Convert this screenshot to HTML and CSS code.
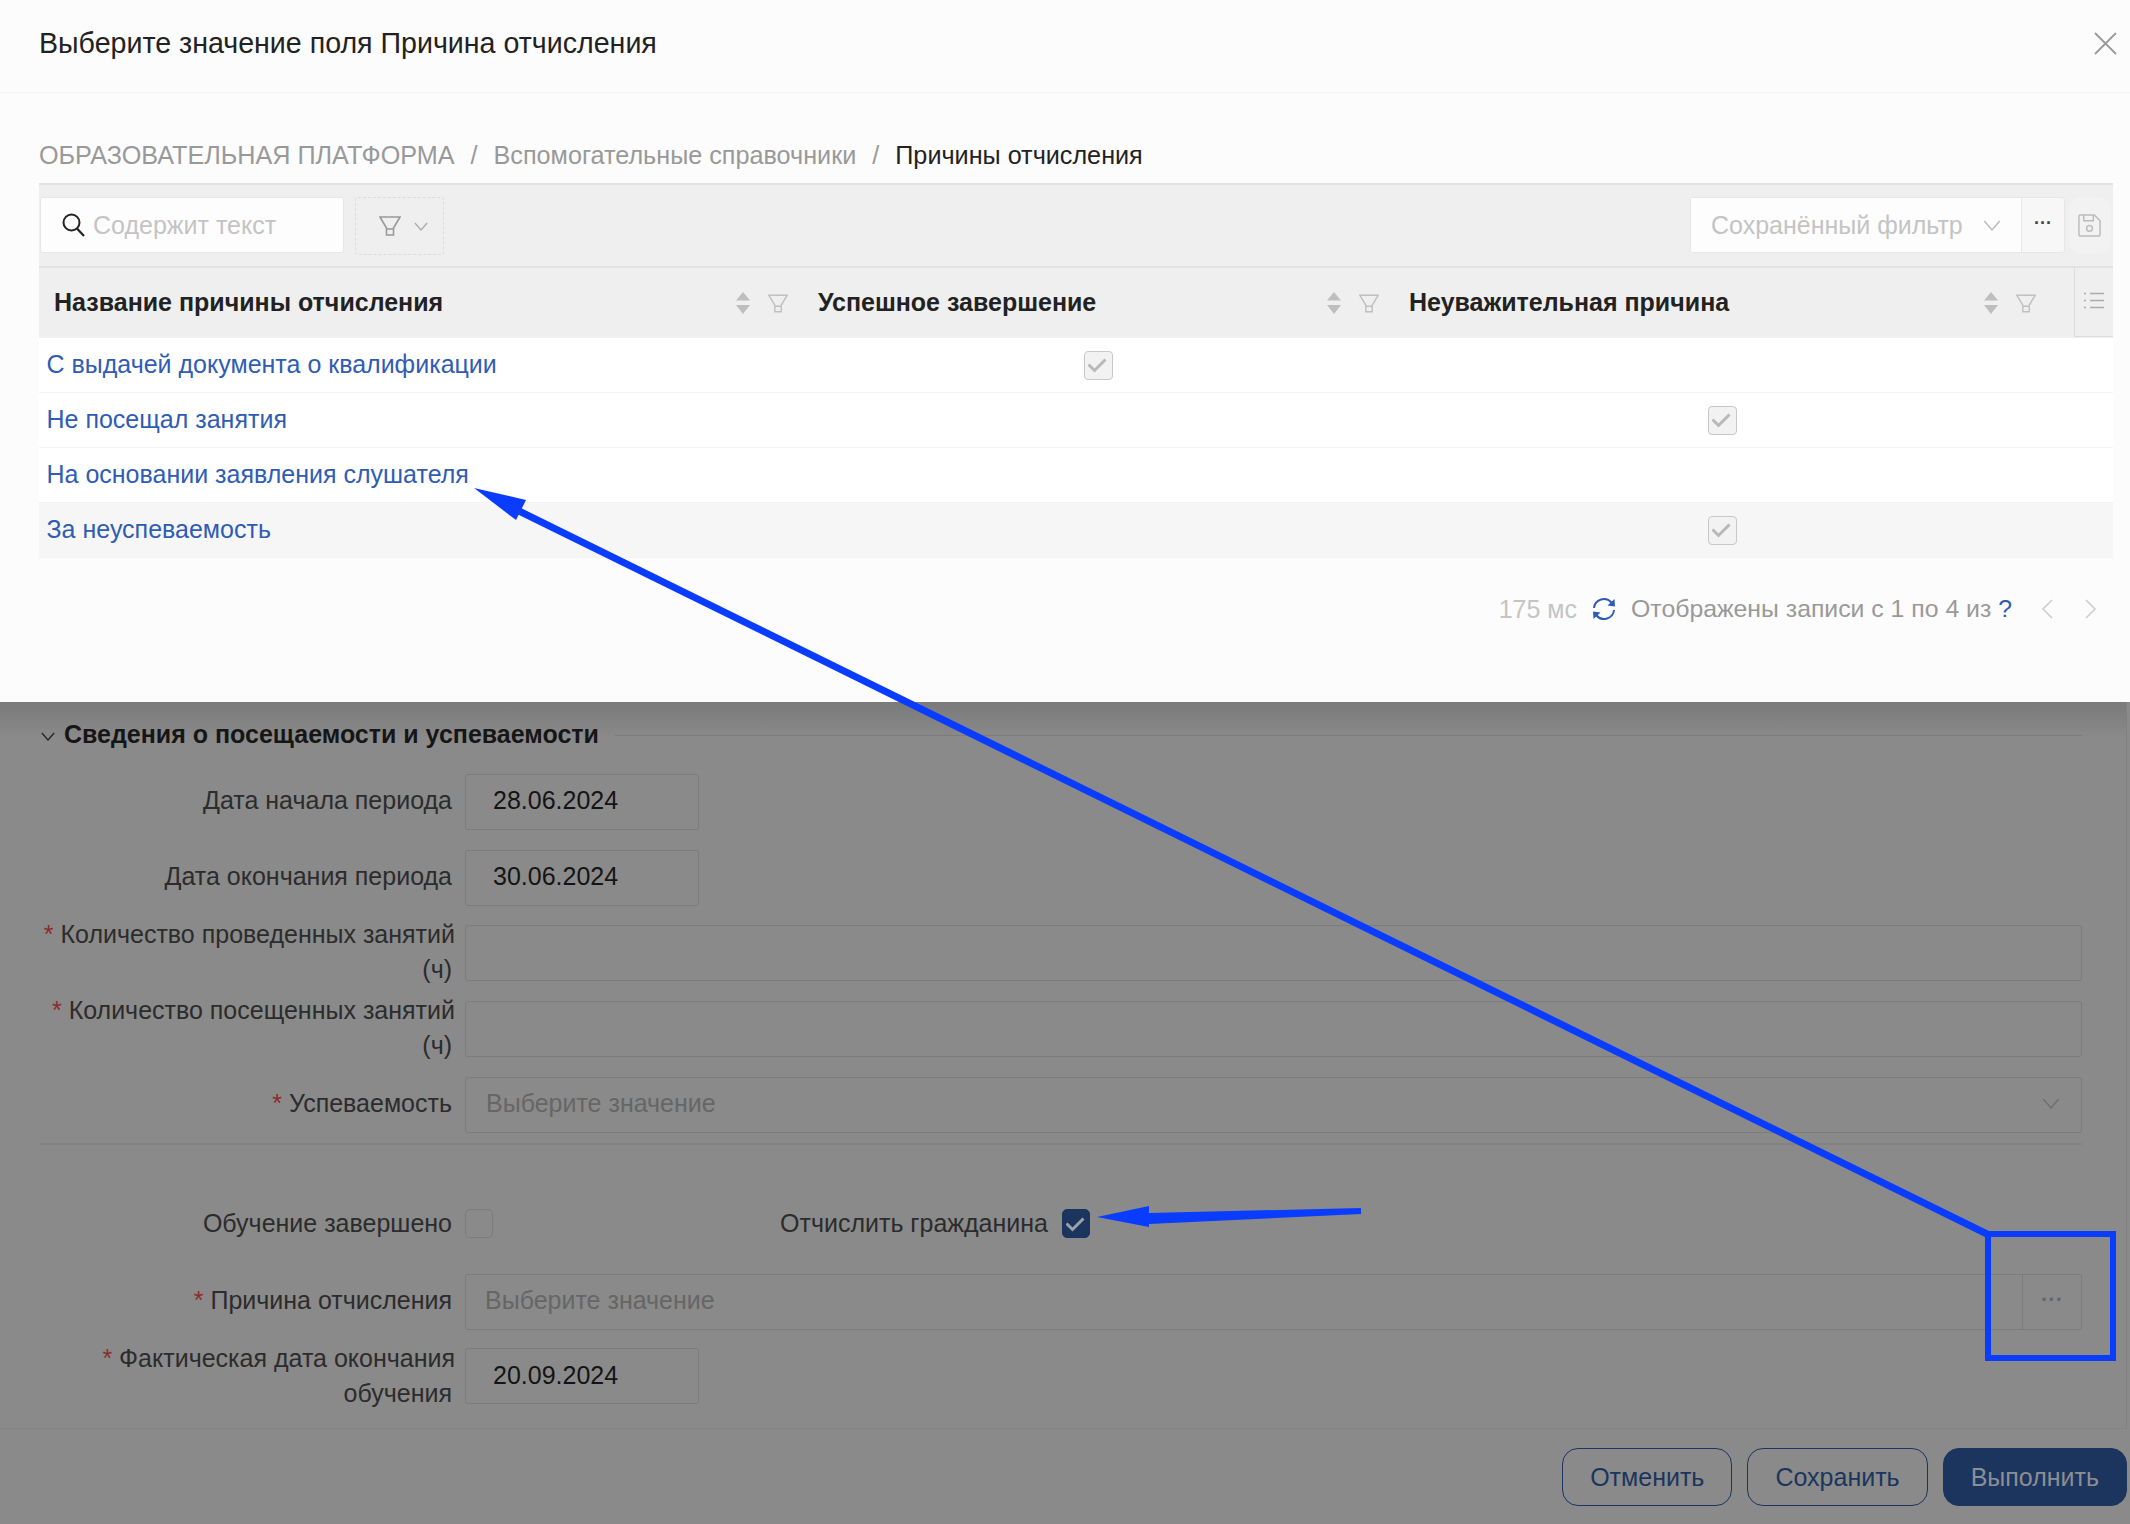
FILE: index.html
```html
<!DOCTYPE html>
<html lang="ru">

<head>
    <meta charset="UTF-8">
    <meta name="viewport" content="width=device-width, initial-scale=1.0">
    <title>Причина отчисления</title>
    <link rel="stylesheet" href="styles.css">
</head>

<body>
    <svg class="icon-defs" aria-hidden="true">
        <symbol id="funnel" viewBox="0 0 22 20">
            <path d="M1 1H21L14.5 12V19H7.5V12ZM7.5 13H14.5" fill="none" stroke="currentColor" stroke-width="1.6" />
        </symbol>
        <symbol id="sort" viewBox="0 0 14 22">
            <path class="sort-up" d="M7 0L14 8.500H0Z" />
            <path class="sort-down" d="M0 13H14L7 22Z" />
        </symbol>
        <symbol id="chevron" viewBox="0 0 16 10">
            <path d="M1 1L8 9L15 1" fill="none" stroke="currentColor" stroke-width="1.4" />
        </symbol>
        <symbol id="tick" viewBox="0 0 20 18">
            <path d="M0.500 8.500L6.500 14.500L17.500 3.500" fill="none" stroke="currentColor" stroke-width="3" />
        </symbol>
    </svg>

    <div class="modal">
        <div class="modal-head">
            <h2>Выберите значение поля Причина отчисления</h2>
            <svg class="close-icon" viewBox="0 0 23 23">
                <path d="M1 1L22 22M22 1L1 22" fill="none" stroke="currentColor" stroke-width="1.8" />
            </svg>
        </div>

        <div class="modal-body">
            <div class="crumbs">
                <span>ОБРАЗОВАТЕЛЬНАЯ ПЛАТФОРМА</span>
                <span class="crumb-sep">/</span>
                <span>Вспомогательные справочники</span>
                <span class="crumb-sep">/</span>
                <span class="crumb-current">Причины отчисления</span>
            </div>

            <div class="toolbar">
                <div class="search-box">
                    <svg class="search-icon" viewBox="0 0 23 24">
                        <circle cx="9.5" cy="9.5" r="8" fill="none" stroke="currentColor" stroke-width="2" />
                        <path d="M15 15.5L22 23" fill="none" stroke="currentColor" stroke-width="2.2" />
                    </svg>
                    <span>Содержит текст</span>
                </div>
                <div class="filter-btn">
                    <svg class="funnel-big"><use href="#funnel" /></svg>
                    <svg class="chevron-small"><use href="#chevron" /></svg>
                </div>
                <div class="saved-filter">
                    <div class="saved-select">
                        <span>Сохранённый фильтр</span>
                        <svg class="chevron-big"><use href="#chevron" /></svg>
                    </div>
                    <div class="saved-more">···</div>
                </div>
                <div class="save-btn">
                    <svg class="save-icon" viewBox="0 0 24 24">
                        <path d="M2 1H17L23 7V21A2 2 0 0 1 21 23H3A2 2 0 0 1 1 21V2ZM6 1V7H16V1" fill="none" stroke="currentColor" stroke-width="1.5" />
                        <circle cx="12" cy="15" r="3" fill="none" stroke="currentColor" stroke-width="1.5" />
                    </svg>
                </div>
            </div>

            <div class="grid-row grid-head">
                <div class="head-cell">
                    <span class="head-title">Название причины отчисления</span>
                    <svg class="sort-icon"><use href="#sort" /></svg>
                    <svg class="funnel-small"><use href="#funnel" /></svg>
                </div>
                <div class="head-cell head-middle">
                    <span class="head-title">Успешное завершение</span>
                    <svg class="sort-icon sort-active"><use href="#sort" /></svg>
                    <svg class="funnel-small"><use href="#funnel" /></svg>
                </div>
                <div class="head-cell head-last">
                    <span class="head-title">Неуважительная причина</span>
                    <svg class="sort-icon"><use href="#sort" /></svg>
                    <svg class="funnel-small"><use href="#funnel" /></svg>
                </div>
                <div class="list-cell">
                    <svg class="list-icon" viewBox="0 0 20 17">
                        <path d="M0 1.5H2M6 1.5H20M0 8.5H2M6 8.5H20M0 15.5H2M6 15.5H20" fill="none" stroke="currentColor" stroke-width="1.5" />
                    </svg>
                </div>
            </div>

            <div class="grid-row data-row">
                <a class="row-link">С выдачей документа о квалификации</a>
                <div class="check-cell"><span class="check-box"><svg><use href="#tick" /></svg></span></div>
                <div></div>
                <div></div>
            </div>
            <div class="grid-row data-row">
                <a class="row-link">Не посещал занятия</a>
                <div></div>
                <div class="check-cell"><span class="check-box"><svg><use href="#tick" /></svg></span></div>
                <div></div>
            </div>
            <div class="grid-row data-row">
                <a class="row-link">На основании заявления слушателя</a>
                <div></div>
                <div></div>
                <div></div>
            </div>
            <div class="grid-row data-row row-hover">
                <a class="row-link">За неуспеваемость</a>
                <div></div>
                <div class="check-cell"><span class="check-box"><svg><use href="#tick" /></svg></span></div>
                <div></div>
            </div>

            <div class="pager">
                <span class="pager-time">175 мс</span>
                <svg class="refresh-icon" viewBox="0 0 26 26">
                    <path d="M3 12A10 10 0 0 1 20.500 6.500M23 14A10 10 0 0 1 5.500 19.500" fill="none" stroke="currentColor" stroke-width="2" />
                    <path d="M23.500 3L24 10.500L16.500 9.500ZM2.500 23L2 15.500L9.500 16.500Z" fill="currentColor" />
                </svg>
                <span class="pager-text">Отображены записи с 1 по 4 из <b>?</b></span>
                <svg class="pager-arrow" viewBox="0 0 12 20">
                    <path d="M11 1L2 10L11 19" fill="none" stroke="currentColor" stroke-width="1.5" />
                </svg>
                <svg class="pager-arrow" viewBox="0 0 12 20">
                    <path d="M1 1L10 10L1 19" fill="none" stroke="currentColor" stroke-width="1.5" />
                </svg>
            </div>
        </div>
    </div>

    <div class="page">
        <div class="form-area">
            <div class="section-head">
                <svg class="section-chevron"><use href="#chevron" /></svg>
                <span class="section-title">Сведения о посещаемости и успеваемости</span>
                <span class="section-line"></span>
            </div>

            <div class="field-group">
                <div class="field">
                    <label>Дата начала периода</label>
                    <div class="input input-date">28.06.2024</div>
                </div>
                <div class="field">
                    <label>Дата окончания периода</label>
                    <div class="input input-date">30.06.2024</div>
                </div>
                <div class="field">
                    <label><span class="first-line"><i>*</i> Количество проведенных занятий</span><br>(ч)</label>
                    <div class="input"></div>
                </div>
                <div class="field">
                    <label><span class="first-line"><i>*</i> Количество посещенных занятий</span><br>(ч)</label>
                    <div class="input"></div>
                </div>
                <div class="field">
                    <label><i>*</i> Успеваемость</label>
                    <div class="input input-select">
                        <span class="placeholder">Выберите значение</span>
                        <svg class="chevron-big"><use href="#chevron" /></svg>
                    </div>
                </div>
            </div>

            <div class="form-divider"></div>

            <div class="field check-field">
                <label>Обучение завершено</label>
                <span class="form-check"></span>
                <label class="second-label">Отчислить гражданина</label>
                <span class="form-check form-check-on"><svg><use href="#tick" /></svg></span>
            </div>

            <div class="field reason-field">
                <label><i>*</i> Причина отчисления</label>
                <div class="input input-picker">
                    <span class="placeholder">Выберите значение</span>
                    <span class="picker-more">···</span>
                </div>
            </div>

            <div class="field date-field">
                <label><span class="first-line"><i>*</i> Фактическая дата окончания</span><br>обучения</label>
                <div class="input input-date">20.09.2024</div>
            </div>
        </div>

        <div class="form-footer">
            <button class="btn">Отменить</button>
            <button class="btn">Сохранить</button>
            <button class="btn btn-primary">Выполнить</button>
        </div>
    </div>

    <!-- annotation arrows drawn over the screenshot -->
    <svg class="annotations" viewBox="0 0 2130 1524">
        <path d="M1987 1234L515 509" fill="none" stroke="#0a3cff" stroke-width="7" />
        <polygon points="474,488 526,500 516,520" fill="#0a3cff" />
        <rect x="1988" y="1234" width="125" height="124" fill="none" stroke="#0a3cff" stroke-width="6" />
        <polygon points="1097,1217 1149,1206 1149,1213 1361,1208 1361,1214 1149,1224 1149,1227" fill="#0a3cff" />
    </svg>
</body>

</html>
```

FILE: styles.css
```css
* {
    box-sizing: border-box;
}

body {
    margin: 0;
    height: 1524px;
    overflow: hidden;
    position: relative;
    font-family: "Liberation Sans", Arial, sans-serif;
    font-size: 25px;
    background-color: #8a8a8a;
}

.icon-defs {
    display: none;
}

/* modal */
.modal {
    height: 702px;
    background-color: #fcfcfc;
}

.modal-head {
    height: 93px;
    padding: 0 13px 6px 39px;
    border-bottom: 1px solid #f3f3f3;
    display: flex;
    align-items: center;
    justify-content: space-between;
}

.modal-head h2 {
    margin: 0;
    font-size: 28.600px;
    font-weight: 400;
    color: #222;
}

.close-icon {
    width: 23px;
    height: 23px;
    color: #999;
}

.modal-body {
    padding: 45px 17px 0 39px;
}

.crumbs {
    height: 35px;
    margin-bottom: 10px;
    display: flex;
    align-items: center;
    gap: 16px;
    font-size: 25.200px;
    color: #999;
}

.crumb-current {
    color: #222;
}

.toolbar {
    height: 85px;
    padding: 12px 2px 0 1px;
    background-color: #efefef;
    border-top: 2px solid #e2e2e2;
    border-bottom: 2px solid #e2e2e2;
    display: flex;
    align-items: flex-start;
}

.search-box {
    width: 304px;
    height: 56px;
    padding-left: 21px;
    background-color: #fdfdfd;
    border: 1px solid #e6e6e6;
    border-radius: 3px;
    display: flex;
    align-items: center;
    gap: 8px;
    color: #c4c4c4;
}

.search-icon {
    width: 23px;
    height: 24px;
    color: #222;
}

.filter-btn {
    width: 89px;
    height: 58px;
    margin-left: 11px;
    padding-left: 23px;
    border: 1px dashed #dcdcdc;
    border-radius: 3px;
    display: flex;
    align-items: center;
    gap: 13px;
}

.funnel-big {
    width: 22px;
    height: 20px;
    color: #999;
}

.chevron-small {
    width: 14px;
    height: 9px;
    color: #aaa;
}

.saved-filter {
    margin-left: auto;
    height: 56px;
    display: flex;
    background-color: #f7f7f7;
    border: 1px solid #e6e6e6;
    border-radius: 3px;
}

.saved-select {
    width: 331px;
    padding: 0 20px;
    background-color: #fdfdfd;
    border-right: 1px solid #e6e6e6;
    display: flex;
    align-items: center;
    justify-content: space-between;
    color: #c4c4c4;
}

.chevron-big {
    width: 18px;
    height: 11px;
    color: #bbb;
}

.saved-more {
    width: 42px;
    text-align: center;
    line-height: 50px;
    font-size: 18px;
    font-weight: 700;
    color: #444;
}

.save-btn {
    width: 42px;
    height: 56px;
    margin-left: 4px;
    padding-right: 2px;
    background-color: #f2f2f2;
    border-radius: 12px;
    display: flex;
    align-items: center;
    justify-content: center;
}

.save-icon {
    width: 23px;
    height: 23px;
    color: #bbb;
}

/* table */
.grid-row {
    display: grid;
    grid-template-columns: 762px 594px 654px 64px;
}

.grid-head {
    height: 70px;
    background-color: #efefef;
}

.head-cell {
    padding: 0 13px 0 15px;
    display: flex;
    align-items: center;
    justify-content: flex-end;
    gap: 18px;
}

.head-middle {
    padding: 0 16px 0 17px;
}

.head-last {
    padding-left: 14px;
}

.head-title {
    margin-right: auto;
    padding-bottom: 1px;
    font-weight: 700;
    color: #222;
}

.sort-icon {
    width: 14px;
    height: 22px;
    fill: #bebebe;
}

.sort-active .sort-down {
    fill: #2f5cb5;
}

.funnel-small {
    width: 20px;
    height: 19px;
    color: #c0c0c0;
}

.list-cell {
    margin-left: 25px;
    height: 69px;
    border-left: 1px solid #dcdcdc;
    border-bottom: 1px solid #dcdcdc;
    display: flex;
    align-items: center;
    justify-content: center;
}

.list-icon {
    width: 20px;
    height: 17px;
    margin-bottom: 4px;
    color: #aaa;
}

.data-row {
    height: 55px;
    background-color: #fff;
    border-bottom: 1px solid #f3f3f3;
    align-items: center;
}

.row-hover {
    background-color: #f6f6f6;
}

.row-link {
    padding: 0 0 2px 7.500px;
    color: #2f5cb5;
}

.check-cell {
    display: flex;
    justify-content: center;
}

.check-box {
    width: 29px;
    height: 29px;
    background-color: #f2f2f2;
    border: 1px solid #c8c8c8;
    border-radius: 4px;
    display: flex;
    align-items: center;
    justify-content: center;
    color: #b8b8b8;
}

.check-box svg,
.form-check svg {
    width: 20px;
    height: 18px;
}

.pager {
    height: 102px;
    padding-right: 16px;
    display: flex;
    align-items: center;
    justify-content: flex-end;
}

.pager-time {
    color: #c4c4c4;
}

.refresh-icon {
    width: 26px;
    height: 26px;
    margin: 0 14px;
    color: #2f5cb5;
}

.pager-text {
    font-size: 24.800px;
    color: #999;
    margin-right: 29px;
}

.pager-text b {
    font-weight: 400;
    color: #2f5cb5;
}

.pager-arrow {
    width: 12px;
    height: 20px;
    color: #ccc;
}

.pager-arrow + .pager-arrow {
    margin-left: 32px;
}

/* form behind the modal */
.page {
    height: 822px;
}

.form-area {
    width: 2127px;
    height: 727px;
    padding: 16px 44px 0 39px;
    background-image: linear-gradient(#7a7a7a, #8a8a8a 36px);
    border-right: 1px solid #808080;
    border-bottom: 1px solid #848484;
}

.section-head {
    height: 35px;
    margin-bottom: 21px;
    display: flex;
    align-items: center;
}

.section-chevron {
    width: 14px;
    height: 9px;
    margin: 2px 9px 0 2px;
    color: #222;
}

.section-title {
    padding-bottom: 2px;
    font-weight: 700;
    color: #161616;
}

.section-line {
    flex: 1;
    height: 1px;
    margin-left: 16px;
    background-color: #7c7c7c;
}

.field-group {
    display: flex;
    flex-direction: column;
    gap: 19.700px;
}

.field {
    height: 56px;
    display: flex;
    align-items: center;
}

.field label {
    width: 413px;
    margin-right: 13px;
    flex-shrink: 0;
    text-align: right;
    line-height: 35px;
    color: #2c2c2c;
}

.field-group label,
.reason-field label {
    padding-bottom: 3px;
}

.field label i {
    font-style: normal;
    color: #8c2c2c;
}

.first-line {
    margin-right: -3px;
}

.input {
    flex: 1;
    height: 56px;
    padding-left: 20px;
    border: 1px solid #7c7c7c;
    border-radius: 3px;
    display: flex;
    align-items: center;
    color: #141414;
}

.field-group .input,
.reason-field .placeholder {
    padding-bottom: 3px;
}

.input-date {
    flex: 0 0 234px;
    padding-left: 27px;
}

.input-select {
    justify-content: space-between;
    padding-right: 21px;
}

.placeholder {
    color: #666;
}

.input-select .chevron-big {
    color: #707070;
}

.input-picker {
    padding-left: 19px;
    padding-right: 0;
    justify-content: space-between;
}

.picker-more {
    width: 59px;
    height: 100%;
    border-left: 1px solid #7c7c7c;
    text-align: center;
    line-height: 50px;
    font-size: 22px;
    font-weight: 700;
    color: #666;
}

.form-divider {
    height: 2px;
    margin: 10px 0 51px;
    background-color: #828282;
}

.check-field {
    margin-bottom: 22px;
}

.form-check {
    width: 28px;
    height: 29px;
    flex-shrink: 0;
    border: 1px solid #7c7c7c;
    border-radius: 5px;
    display: flex;
    align-items: center;
    justify-content: center;
}

.form-check-on {
    background-color: #1c355e;
    border-color: #1c355e;
    color: #9ea1a6;
}

.field .second-label {
    width: 555px;
    margin-right: 14px;
}

.reason-field {
    margin-bottom: 18px;
}

.form-footer {
    height: 95px;
    padding: 19px 3px 0 0;
    display: flex;
    justify-content: flex-end;
    gap: 15px;
}

.btn {
    height: 58px;
    padding: 0 27px;
    font-family: inherit;
    font-size: 25px;
    color: #1c355e;
    background: none;
    border: 1px solid #1c355e;
    border-radius: 16px;
}

.btn-primary {
    color: #8b8e94;
    background-color: #1c355e;
}

.annotations {
    position: absolute;
    top: 0;
    left: 0;
    width: 2130px;
    height: 1524px;
    pointer-events: none;
}
```
